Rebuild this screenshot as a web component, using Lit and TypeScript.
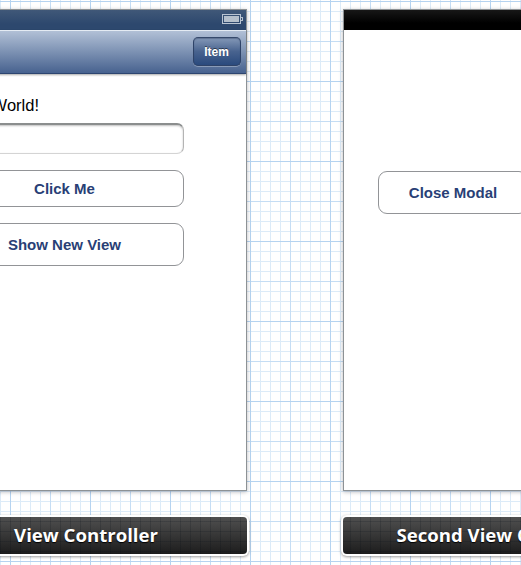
import { LitElement, html, css, svg } from "lit";
import { customElement } from "lit/decorators.js";

@customElement("ib-scene")
class IbScene extends LitElement {
  static properties = { label: { type: String } };
  declare label: string;
  static styles = css`
    :host { display: flex; flex-direction: column; width: 322px; flex: none; }
    .screen {
      box-sizing: border-box; height: 482px; display: flex; flex-direction: column;
      background: #fff; border: 1px solid #8d9295; 
      box-shadow: 0 1px 4px rgba(0, 0, 20, .28);
    }
    .dock {
      box-sizing: border-box; height: 37px; margin-top: 26px; border-radius: 4px;
      background:
        linear-gradient(90deg, rgba(0,10,20,.16) 1px, transparent 1px) 0 1px / 10px 10px fixed,
        linear-gradient(rgba(0,10,20,.16) 1px, transparent 1px) 0 1px / 10px 10px fixed,
        linear-gradient(#505050, #1c1c1c);
      box-shadow: 0 0 0 2px #fff, 0 1px 3px 2px rgba(0, 0, 0, .4);
      color: #fff; font: bold 18.6px/35px "Open Sans", "Noto Sans", sans-serif;
      text-align: center; white-space: nowrap; text-shadow: 0 1px 1px #000;
    }
  `;
  render() {
    return html`<div class="screen"><slot></slot></div>
      <div class="dock">${this.label}</div>`;
  }
}

@customElement("app-root")
class AppRoot extends LitElement {
  static styles = css`
    :host {
      display: block; box-sizing: border-box; width: 521px; height: 565px; overflow: hidden;
      padding-top: 9px; font-family: "Liberation Sans", sans-serif;
      background-color: #fff;
      background-image:
        linear-gradient(90deg, #b5d3f0 1px, transparent 1px),
        linear-gradient(#b5d3f0 1px, transparent 1px),
        linear-gradient(90deg, #c5ddf4 1px, transparent 1px),
        linear-gradient(#c5ddf4 1px, transparent 1px),
        linear-gradient(90deg, #dcebf8 1px, transparent 1px),
        linear-gradient(#dcebf8 1px, transparent 1px);
      background-size: 80px 80px, 80px 80px, 40px 40px, 40px 40px, 10px 10px, 10px 10px;
      background-position: 10px 1px;
    }
    .canvas { display: flex; gap: 96px; margin-left: -75px; }
    .status {
      box-sizing: border-box; height: 20px; flex: none; display: flex; align-items: center;
      justify-content: flex-end; padding: 0 3px 2px 0;
      background: linear-gradient(#405878, #2d486e 70%, #2d486e);
    }
    .status.black { background: linear-gradient(#171717, #000 65%); }
    .nav {
      box-sizing: border-box; height: 44px; flex: none; display: flex; justify-content: flex-end;
      padding: 6px 5px 0 0; border-top: 1px solid #e4ebf3; border-bottom: 1px solid #2d4570;
      background: linear-gradient(#b1c0d6, #47628f);
      box-shadow: 0 1px 2px rgba(0, 0, 0, .35);
    }
    .item {
      box-sizing: border-box; width: 48px; height: 29px; border-radius: 5px;
      border: 1px solid #2e4368; border-top-color: #35496b;
      background: linear-gradient(#8498b7, #48638f 50%, #2a4a7d);
      box-shadow: inset 0 1px 1px rgba(20, 35, 70, .3), 0 1px 0 rgba(255, 255, 255, .3);
      color: #fff; font-size: 12px; font-weight: bold; line-height: 28px; text-align: center;
      text-shadow: 0 -1px 0 rgba(0, 0, 0, .5); padding-right: 1px;
    }
    .body { display: flex; flex-direction: column; padding: 20px 62px 0 18px; }
    .greet { font-size: 16.5px; line-height: 22px; width: 95px; text-align: right; white-space: nowrap; color: #000; }
    .field {
      box-sizing: border-box; height: 31px; margin-top: 7px; border-radius: 7px;
      border: 1px solid #b4b4b4; border-top: 2px solid #8b8e8e; border-bottom-color: #d4d4d4;
      box-shadow: inset 0 1px 2px rgba(0, 0, 0, .25);
    }
    .btn {
      box-sizing: border-box; border: 1px solid #929497; border-radius: 9px; background: #fff;
      display: flex; align-items: center; justify-content: center;
      color: #293f76; font-size: 15px; font-weight: bold; white-space: nowrap;
    }
    .click { height: 37px; margin-top: 16px; padding-left: 1px; }
    .show { height: 43px; margin-top: 16px; padding-left: 1px; }
    .close { height: 43px; width: 150px; margin: 141px 0 0 34px; }
  `;
  battery() {
    return html`<svg width="22" height="10" viewBox="0 0 22 10" shape-rendering="crispEdges">
      ${svg`<rect x="1.5" y=".5" width="18" height="9" fill="none" stroke="#b9c4d2"/>
      <rect x="3" y="2" width="15" height="6" fill="#b5c0cc"/>
      <path d="M20 3.5h1.5v3h-1.5" fill="none" stroke="#b5c0cc"/>`}
    </svg>`;
  }
  render() {
    return html`<div class="canvas">
      <ib-scene label="View Controller">
        <div class="status">${this.battery()}</div>
        <div class="nav"><div class="item">Item</div></div>
        <div class="body">
          <div class="greet">Hello World!</div>
          <div class="field"></div>
          <div class="btn click">Click Me</div>
          <div class="btn show">Show New View</div>
        </div>
      </ib-scene>
      <ib-scene label="Second View Controller">
        <div class="status black"></div>
        <div class="btn close">Close Modal</div>
      </ib-scene>
    </div>`;
  }
}
